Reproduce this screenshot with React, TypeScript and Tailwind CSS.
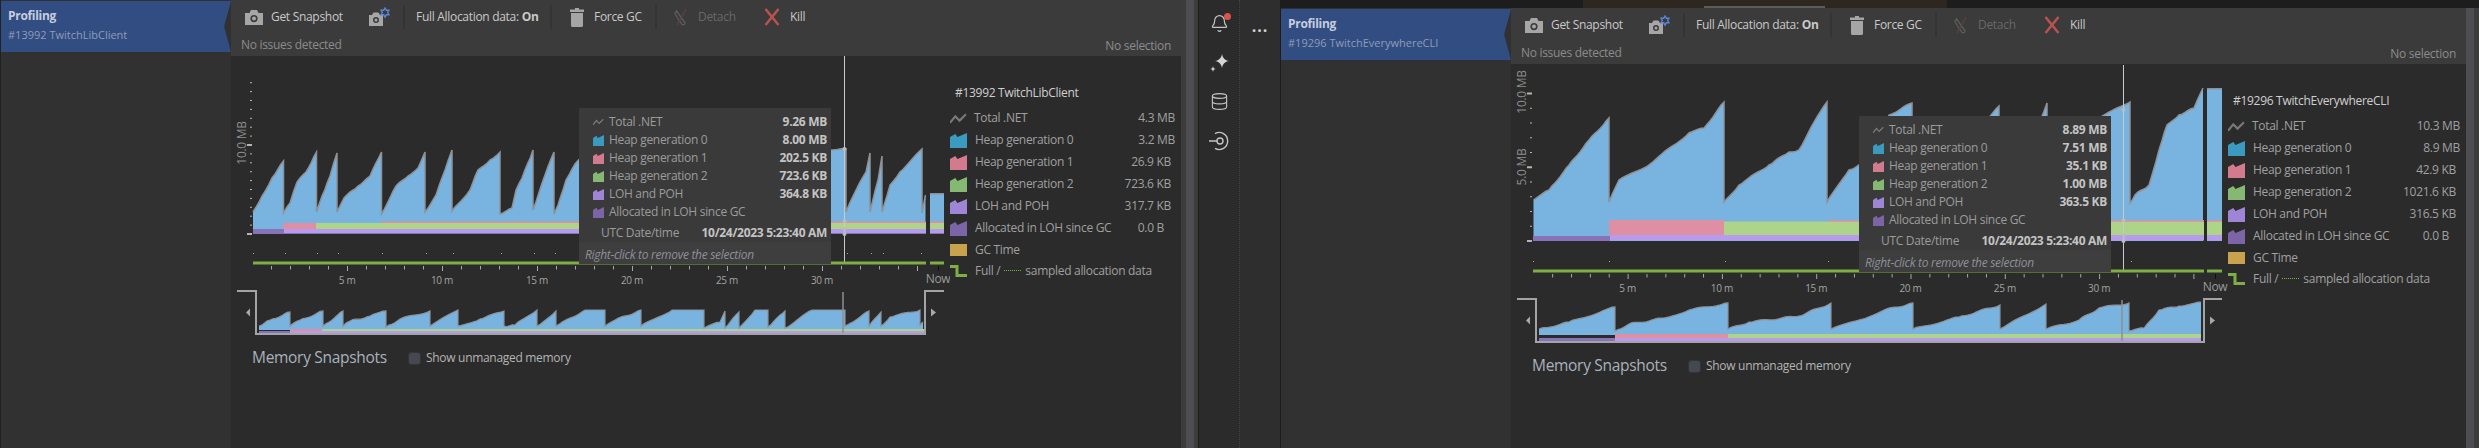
import { Bell, Database } from "lucide-react";

type Pt = [number, number];
type Bar = [number, number, number, number, string];

const BLUE = "#79b3e0";
const PINK = "#df8fa3";
const GREEN = "#aed489";
const LILAC = "#b79cee";
const PLUM = "#8872b8";

// jagged outline of one saw tooth, the reference is a stepped line
function jag(points: Pt[]) {
  const out: string[] = [];
  points.forEach((p, i) => {
    if (i === 0) {
      out.push(`${p[0]},${p[1]}`);
      return;
    }
    const [x0, y0] = points[i - 1];
    const n = Math.max(1, Math.round((p[0] - x0) / 3));
    for (let k = 1; k <= n; k++) {
      const t = k / n;
      const x = x0 + (p[0] - x0) * t;
      const flat = y0 === p[1];
      const noise = k === n || flat ? 0 : Math.sin(x * 1.9) * 0.8;
      out.push(`${x.toFixed(1)},${(y0 + (p[1] - y0) * t + noise).toFixed(1)}`);
    }
  });
  return out;
}

function Teeth({ teeth, base, width }: { teeth: Pt[][]; base: number; width: number }) {
  const line = teeth.flatMap((t) => jag(t)).join(" ");
  const first = teeth[0][0];
  const end = teeth[teeth.length - 1][teeth[teeth.length - 1].length - 1];
  return (
    <>
      <polygon points={`${first[0]},${base} ${line} ${end[0]},${base}`} fill={BLUE} />
      <polyline points={line} fill="none" stroke="#8e9298" strokeWidth={width} />
    </>
  );
}

type ChartData = {
  x: number;
  y: number;
  w: number;
  zero: number;
  step: number;
  tickCount: number;
  majors: number[];
  tickX: number;
  axisLabels: { text: string; x: number; y: number }[];
  teeth: Pt[][];
  block: [number, number, number];
  stack: Bar[];
  gap: [number, number];
  crossX: number;
  crossTop: number;
  crossDots: number[];
  gcY: number;
  gcDots: number[];
  allocY: number;
  t0: number;
  tStep: number;
  tickY: number;
  labelY: number;
  nowX: number;
  nowY: number;
  start: number;
  miniTeeth: Pt[][];
  miniBase: number;
  miniStack: Bar[];
  bracket: { x0: number; vx: number; top: number; bot: number; rx: number; end: number };
  miniLine: number;
};

function Chart({ d }: { d: ChartData }) {
  const ticks = Array.from({ length: d.tickCount }, (_, i) => i);
  const minutes = Array.from({ length: 35 }, (_, i) => i + 1);
  const b = d.bracket;
  const arrowY = (b.top + b.bot) / 2;
  return (
    <svg viewBox={`${d.x} ${d.y} ${d.w} 290`} className="block h-[290px] shrink-0" style={{ width: d.w }}>
      {ticks.map((i) => {
        const major = d.majors.includes(i);
        return (
          <rect key={i} x={major ? d.tickX - 3 : d.tickX} y={d.zero - i * d.step - (major ? 1 : 0.5)} width={major ? 5 : 2} height={major ? 2 : 1} fill="#b5b5b5" />
        );
      })}
      {d.axisLabels.map((l) => (
        <text key={l.text} x={l.x} y={l.y} transform={`rotate(-90 ${l.x} ${l.y})`} textAnchor="middle" dominantBaseline="central" fontSize="12" fill="#8d8d8d">
          {l.text}
        </text>
      ))}

      <Teeth teeth={d.teeth} base={d.zero} width={1.5} />
      <rect x={d.block[0]} y={d.block[2]} width={d.block[1] - d.block[0]} height={d.zero - d.block[2]} fill={BLUE} />
      <rect x={d.block[0]} y={d.block[2] - 1} width={d.block[1] - d.block[0]} height={1.5} fill="#8e9298" />
      {d.stack.map(([x1, x2, y1, y2, c], i) => (
        <rect key={i} x={x1} y={y1} width={x2 - x1} height={y2 - y1} fill={c} />
      ))}
      <rect x={d.gap[0]} y={d.y} width={d.gap[1] - d.gap[0]} height={d.zero + 0.5 - d.y} fill="#2b2b2b" />

      <line x1={d.crossX} y1={d.crossTop} x2={d.crossX} y2={d.allocY + 1} stroke="#c9c9c9" />
      {d.crossDots.map((y) => (
        <circle key={y} cx={d.crossX} cy={y} r={2} fill="#b9bcc0" />
      ))}

      {d.gcDots.map((x) => (
        <rect key={x} x={x} y={d.gcY} width={1} height={1} fill="#c9a24e" />
      ))}
      <rect x={d.start} y={d.allocY - 1.5} width={d.gap[0] - d.start} height={3} fill="#7fae45" />
      <rect x={d.gap[1]} y={d.allocY - 1.5} width={d.block[1] - d.gap[1]} height={3} fill="#7fae45" />

      {minutes.map((m) => (
        <rect key={m} x={d.t0 + m * d.tStep} y={d.tickY} width={1} height={m % 5 === 0 ? 5 : 3.5} fill="#a8a8a8" />
      ))}
      <rect x={d.nowX} y={d.tickY} width={1} height={5} fill="#111111" />
      {[5, 10, 15, 20, 25, 30].map((m) => (
        <text key={m} x={d.t0 + m * d.tStep} y={d.labelY} textAnchor="middle" dominantBaseline="central" fontSize="10" fill="#a3a3a3">
          {m} m
        </text>
      ))}
      <text x={d.nowX} y={d.nowY} textAnchor="middle" dominantBaseline="central" fontSize="12" fill="#9a9a9a">
        Now
      </text>

      <Teeth teeth={d.miniTeeth} base={d.miniBase} width={1.2} />
      {d.miniStack.map(([x1, x2, y1, y2, c], i) => (
        <rect key={i} x={x1} y={y1} width={x2 - x1} height={y2 - y1} fill={c} />
      ))}
      <line x1={d.miniLine} y1={b.top + 1} x2={d.miniLine} y2={b.bot} stroke="#8f8f8f" strokeWidth={1.5} />
      <polyline points={`${b.x0},${b.top} ${b.vx},${b.top} ${b.vx},${b.bot} ${b.rx},${b.bot} ${b.rx},${b.top} ${b.end},${b.top}`} fill="none" stroke="#a3a3a8" strokeWidth={2} />
      <polygon points={`${b.vx - 6},${arrowY - 4} ${b.vx - 6},${arrowY + 4} ${b.vx - 10},${arrowY}`} fill="#a8a8a8" />
      <polygon points={`${b.rx + 6},${arrowY - 4} ${b.rx + 6},${arrowY + 4} ${b.rx + 11},${arrowY}`} fill="#a8a8a8" />
    </svg>
  );
}

function CameraIcon({ className }: { className?: string }) {
  return (
    <svg viewBox="0 0 18 15" className={className}>
      <path fillRule="evenodd" fill="#a6a6a6" d="M0 3h4.500l1.500-3h6l1.500 3H18v12H0zM9 5a3.600 3.600 0 100 7.200 3.600 3.600 0 000-7.200zM9 6.600a2 2 0 110 4 2 2 0 010-4z" />
    </svg>
  );
}

function GearCamera() {
  return (
    <svg viewBox="0 0 21 20" className="h-[20px] w-[21px]">
      <path fillRule="evenodd" fill="#a6a6a6" d="M0 8h3l1.500-2.500h5L11 8h3v11H0zM7 10a3 3 0 100 6 3 3 0 000-6zM7 11.500a1.500 1.500 0 110 3 1.500 1.500 0 010-3z" />
      <path fill="none" stroke="#5b83d6" strokeWidth="1.400" d="M16 1l1.300 2.200H20l-1.300 2.300L20 7.800h-2.700L16 10l-1.300-2.200H12l1.300-2.300L12 3.200h2.700z" />
    </svg>
  );
}

function TrashIcon() {
  return (
    <svg viewBox="0 0 14 19" className="h-[19px] w-[14px]">
      <path fill="#a6a6a6" d="M5 0h4v1.500h5v2.500H0V1.500h5zM1 5h12v12.500a1.500 1.500 0 01-1.500 1.500h-9A1.500 1.500 0 011 17.500z" />
    </svg>
  );
}

function DetachIcon() {
  return (
    <svg viewBox="0 0 16 18" className="h-[18px] w-[16px]" fill="none" strokeWidth="1.300">
      <path stroke="#5d5d5d" d="M3 2l9 13a2 2 0 01-3 1.500L2 6a1.500 1.500 0 012.500-1.500L11 14" />
      <path stroke="#5b4442" d="M13 1L4 17" />
    </svg>
  );
}

function KillIcon() {
  return (
    <svg viewBox="0 0 16 18" className="h-[18px] w-[16px]">
      <path stroke="#b9524f" strokeWidth="2.600" fill="none" d="M1.500 1l13 16M14.500 1l-13 16" />
    </svg>
  );
}

function Separator({ left }: { left: string }) {
  return <div className={`h-[24px] w-[2px] bg-[#343434] ${left}`} />;
}

function Toolbar() {
  return (
    <div className="h-[56px] shrink-0 bg-[#3b3b3b] text-[12px] text-[#c9c9c9]">
      <div className="flex h-[34px] items-center pl-[14px]">
        <CameraIcon className="h-[15px] w-[18px]" />
        <span className="ml-[8px] w-[98px]">Get Snapshot</span>
        <GearCamera />
        <Separator left="ml-[13px]" />
        <span className="ml-[11px] w-[134px] whitespace-nowrap">
          Full Allocation data: <b className="font-bold">On</b>
        </span>
        <Separator left="" />
        <div className="ml-[18px]">
          <TrashIcon />
        </div>
        <span className="ml-[10px] w-[60px] whitespace-nowrap">Force GC</span>
        <Separator left="ml-[1px]" />
        <div className="ml-[16px]">
          <DetachIcon />
        </div>
        <span className="ml-[9px] w-[66px] text-[#676767]">Detach</span>
        <KillIcon />
        <span className="ml-[10px]">Kill</span>
      </div>
      <div className="flex items-center justify-between pl-[10px] pr-[10px] text-[#8b8b8b]">
        <span>No issues detected</span>
        <span className="mt-[3px]">No selection</span>
      </div>
    </div>
  );
}

function SwatchIcon({ color, className }: { color: string; className: string }) {
  return (
    <svg viewBox="0 0 16 15" preserveAspectRatio="none" className={className}>
      <polygon points="0,4 5,1 7,4 16,0 16,15 0,15" fill={color} />
    </svg>
  );
}

function TotalIcon({ className }: { className: string }) {
  return (
    <svg viewBox="0 0 16 10" className={className}>
      <polyline points="0,9 5,3 9,7 15,1" fill="none" stroke="#77777c" strokeWidth="2" />
    </svg>
  );
}

const SWATCHES = ["#3a9abf", "#d27a8e", "#85b973", "#9f85d6", "#7b65a6"];
const ROW_NAMES = ["Heap generation 0", "Heap generation 1", "Heap generation 2", "LOH and POH", "Allocated in LOH since GC"];

function Tooltip({ total, rows }: { total: string; rows: string[] }) {
  return (
    <div className="absolute left-[348px] top-[52px] flex h-[156px] w-[252px] flex-col bg-[#3a3a3a] text-[12px] text-[#9c9c9c]">
      <div className="flex-1 pl-[14px] pr-[4px] pt-[5px]">
        <div className="flex h-[18px] items-center">
          <TotalIcon className="h-[8px] w-[11px]" />
          <span className="ml-[5px] flex-1">Total .NET</span>
          <b className="font-bold text-[#c4c4c4]">{total}</b>
        </div>
        {ROW_NAMES.map((name, i) => (
          <div key={name} className="flex h-[18px] items-center">
            <SwatchIcon color={SWATCHES[i]} className="h-[11px] w-[11px]" />
            <span className="ml-[5px] flex-1">{name}</span>
            <b className="font-bold text-[#c4c4c4]">{rows[i]}</b>
          </div>
        ))}
        <div className="mt-[3px] flex h-[18px] items-center pl-[8px]">
          <span className="flex-1">UTC Date/time</span>
          <b className="font-bold text-[#c4c4c4]">10/24/2023 5:23:40 AM</b>
        </div>
      </div>
      <div className="flex h-[23px] items-center bg-[#3e3e3e] pl-[6px] pt-[4px] italic text-[#8e9099]">Right-click to remove the selection</div>
    </div>
  );
}

function Legend({ title, total, values, margins }: { title: string; total: string; values: string[]; margins: string[] }) {
  return (
    <div className="flex-1 pt-[26px] text-[12px] text-[#a0a0a0]">
      <div className="h-[22px] pl-[5px] leading-[22px] text-[#cfcfcf]">{title}</div>
      <div className="mt-[3px] flex h-[22px] items-center pr-[6px]">
        <TotalIcon className="h-[11px] w-[17px]" />
        <span className="ml-[7px] flex-1">Total .NET</span>
        <span>{total}</span>
      </div>
      {ROW_NAMES.map((name, i) => (
        <div key={name} className="flex h-[22px] items-center pr-[6px]">
          <SwatchIcon color={SWATCHES[i]} className="h-[15px] w-[17px]" />
          <span className="ml-[8px] flex-1">{name}</span>
          <span className={margins[i]}>{values[i]}</span>
        </div>
      ))}
      <div className="flex h-[21px] items-center">
        <div className="h-[12px] w-[17px] bg-[#c9a24e]" />
        <span className="ml-[8px]">GC Time</span>
      </div>
      <div className="flex h-[21px] items-center whitespace-nowrap">
        <svg viewBox="0 0 17 12" className="h-[12px] w-[17px]">
          <polyline points="0,1.500 7,1.500 7,10.500 17,10.500" fill="none" stroke="#7fae45" strokeWidth="3" />
        </svg>
        <span className="ml-[8px]">Full /</span>
        <span className="mx-[4px] inline-block w-[17px] border-t border-dotted border-[#7fae45]" />
        <span>sampled allocation data</span>
      </div>
    </div>
  );
}

function Panel(props: {
  subtitle: string;
  chart: ChartData;
  total: string;
  rows: string[];
  legendTitle: string;
  legendTotal: string;
  legendValues: string[];
}) {
  return (
    <div className="flex flex-1">
      <div className="w-[230px] shrink-0 bg-[#313131]">
        <div className="mt-[1px] flex h-[51px] flex-col justify-center bg-[#324d82] pb-[3px] pl-[7px] [clip-path:polygon(0_0,100%_0,97%_50%,100%_100%,0_100%)]">
          <span className="text-[12px] font-bold leading-[19px] text-[#c6cede]">Profiling</span>
          <span className="text-[11px] leading-[19px] tracking-normal text-[#8f9cb8]">{props.subtitle}</span>
        </div>
      </div>
      <div className="flex min-w-0 flex-1 flex-col bg-[#2b2b2b]">
        <Toolbar />
        <div className="relative flex flex-1">
          <div>
            <Chart d={props.chart} />
            <div className="flex h-[24px] items-center pl-[21px]">
              <span className="w-[156px] whitespace-nowrap text-[15.5px] text-[#a9b2bd]">Memory Snapshots</span>
              <div className="h-[13px] w-[13px] rounded-[3px] border border-[#333] bg-[#434851]" />
              <span className="ml-[5px] whitespace-nowrap text-[12px] text-[#b4b4b4]">Show unmanaged memory</span>
            </div>
          </div>
          <Legend title={props.legendTitle} total={props.legendTotal} values={props.legendValues} margins={["", "mr-[4px]", "mr-[4px]", "mr-[4px]", "mr-[11px]"]} />
          <Tooltip total={props.total} rows={props.rows} />
        </div>
      </div>
    </div>
  );
}

const leftChart: ChartData = {
  x: 231,
  y: 56,
  w: 719,
  zero: 234,
  step: 8.9,
  tickCount: 18,
  majors: [0, 10],
  tickX: 250,
  axisLabels: [{ text: "10.0 MB", x: 241, y: 143 }],
  teeth: [
    [[253, 212], [262, 196], [272, 178], [283.5, 161]],
    [[283.5, 213], [290, 203], [297, 182], [306, 172], [316.5, 152]],
    [[316.5, 212], [322, 196], [330, 176], [337, 153]],
    [[337, 212], [344, 198], [358, 186], [370, 176], [381.5, 152]],
    [[381.5, 214], [396, 186], [408, 176], [418, 168], [425, 152]],
    [[425, 212], [436, 195], [445, 170], [452, 150]],
    [[452, 211], [470, 190], [478, 170], [490, 160], [500, 152]],
    [[500, 214], [512, 208], [516, 190], [522, 178], [533, 150]],
    [[533, 210], [545, 175], [554, 152]],
    [[554, 214], [558, 205], [566, 180], [575, 164], [590, 150], [846, 149]],
    [[846, 212], [856, 190], [866, 172], [870, 153]],
    [[870, 212], [878, 180], [882, 156]],
    [[882, 212], [890, 185], [900, 172], [922, 149]],
    [[922, 213], [925.5, 195]],
  ],
  block: [930, 944, 194],
  stack: [
    [253, 284, 229, 234, PLUM],
    [284, 944, 229, 233.5, LILAC],
    [284, 944, 233, 234, PLUM],
    [283, 316, 223, 229, PINK],
    [316, 944, 223, 229, GREEN],
    [381, 944, 221.5, 223, PINK],
  ],
  gap: [926, 930],
  crossX: 844.5,
  crossTop: 56,
  crossDots: [149, 221, 229, 234],
  gcY: 253,
  gcDots: [253, 285, 317, 338, 382, 426, 453, 501, 534, 555, 847, 871, 883, 921],
  allocY: 263,
  t0: 252,
  tStep: 19,
  tickY: 266,
  labelY: 280,
  nowX: 938,
  nowY: 278,
  start: 253,
  miniTeeth: [
    [[259, 326], [270, 320], [290, 312]],
    [[290, 326], [300, 320], [323, 311]],
    [[323, 326], [343, 311]],
    [[343, 326], [350, 321], [370, 316], [386, 311]],
    [[386, 327], [400, 319], [430, 311]],
    [[430, 326], [458, 310]],
    [[458, 326], [480, 319], [504, 311]],
    [[504, 326], [515, 325], [537, 310]],
    [[537, 326], [556, 311]],
    [[556, 326], [585, 310], [605, 310]],
    [[605, 326], [615, 320], [641, 310]],
    [[641, 326], [672, 310], [704, 310]],
    [[704, 328], [720, 322], [725, 311]],
    [[725, 328], [739, 312]],
    [[739, 328], [755, 310], [768, 310]],
    [[768, 327], [785, 311]],
    [[785, 328], [812, 310], [845, 310]],
    [[845, 326], [869, 311]],
    [[869, 326], [881, 312]],
    [[881, 326], [890, 317], [920, 310]],
    [[920, 325], [923, 322]],
  ],
  miniBase: 330,
  miniStack: [
    [259, 290, 331, 333, PLUM],
    [290, 924, 331, 333, LILAC],
    [290, 322, 329, 331, PINK],
    [322, 924, 329, 331, GREEN],
  ],
  bracket: { x0: 237, vx: 256, top: 291, bot: 334, rx: 925, end: 944 },
  miniLine: 843,
};

const rightChart: ChartData = {
  x: 1512,
  y: 64,
  w: 717,
  zero: 241,
  step: 14.75,
  tickCount: 11,
  majors: [0, 5, 10],
  tickX: 1531,
  axisLabels: [
    { text: "10.0 MB", x: 1522, y: 92 },
    { text: "5.0 MB", x: 1522, y: 167 },
  ],
  teeth: [
    [[1534.5, 200], [1550, 190], [1570, 165], [1590, 140], [1610, 118]],
    [[1610, 202], [1620, 180], [1645, 168], [1675, 145], [1690, 133], [1705, 128], [1725, 102]],
    [[1725, 202], [1740, 185], [1770, 165], [1790, 152], [1800, 150], [1815, 122], [1828, 102]],
    [[1828, 202], [1850, 170], [1870, 160], [1890, 115], [1913, 103]],
    [[1913, 202], [1950, 160], [2000, 106]],
    [[2000, 202], [2030, 150], [2048, 103]],
    [[2048, 202], [2080, 150], [2100, 118], [2131, 102]],
    [[2131, 203], [2136, 195], [2150, 185], [2160, 150], [2168, 125], [2180, 115], [2195, 108], [2204, 88]],
  ],
  block: [2208, 2223, 89],
  stack: [
    [1534, 1611, 236, 241, PLUM],
    [1611, 2223, 235, 240.5, LILAC],
    [1610, 1725, 220, 235, PINK],
    [1725, 2223, 221.5, 235, GREEN],
    [1829, 2223, 220, 221.5, PINK],
  ],
  gap: [2205, 2208],
  crossX: 2124.5,
  crossTop: 65,
  crossDots: [110, 220, 235, 241],
  gcY: 261,
  gcDots: [1534, 1610, 1726, 1829, 1914, 2001, 2049, 2132],
  allocY: 271,
  t0: 1534.3,
  tStep: 18.86,
  tickY: 274,
  labelY: 288,
  nowX: 2216,
  nowY: 286,
  start: 1534,
  miniTeeth: [
    [[1540, 329], [1570, 322], [1616, 307]],
    [[1616, 331], [1630, 324], [1665, 318], [1690, 310], [1729, 303]],
    [[1729, 329], [1750, 322], [1800, 316], [1832, 303]],
    [[1832, 329], [1860, 320], [1885, 310], [1914, 303]],
    [[1914, 329], [1960, 317], [2001, 305]],
    [[2001, 329], [2047, 304]],
    [[2047, 329], [2080, 320], [2100, 308], [2130, 303]],
    [[2130, 331], [2145, 328], [2160, 310], [2180, 306], [2202, 302]],
  ],
  miniBase: 335,
  miniStack: [
    [1540, 1616, 338, 341, PLUM],
    [1616, 2202, 338, 341, LILAC],
    [1616, 1729, 334, 338, PINK],
    [1729, 2202, 334, 338, GREEN],
  ],
  bracket: { x0: 1518, vx: 1537, top: 299, bot: 342, rx: 2205, end: 2223 },
  miniLine: 2123,
};

function SparkleIcon() {
  return (
    <svg viewBox="0 0 22 22" className="h-[22px] w-[22px]">
      <path fill="#d4d4d4" d="M14 1c.800 4.200 2.800 6.200 7 7-4.200.800-6.200 2.800-7 7-.800-4.200-2.800-6.200-7-7 4.200-.800 6.200-2.800 7-7z" />
      <path fill="#d4d4d4" d="M5 13c.300 2 1 2.700 3 3-2 .300-2.700 1-3 3-.300-2-1-2.700-3-3 2-.300 2.700-1 3-3z" />
    </svg>
  );
}

function PluginIcon() {
  return (
    <svg viewBox="0 0 20 20" className="h-[20px] w-[20px]" fill="none" stroke="#c4c4c4" strokeWidth="1.400">
      <circle cx="11" cy="10" r="3" />
      <path d="M0 10h8M6 2.600A8.500 8.500 0 1 1 6 17.400" />
    </svg>
  );
}

export default function App() {
  return (
    <div className="flex h-[448px] w-[2479px] overflow-hidden bg-[#2b2b2b] font-['Open_Sans',sans-serif] tracking-[-0.3px]">
      <div className="flex w-[1181px] border-l border-[#222222]">
        <Panel
          subtitle="#13992 TwitchLibClient"
          chart={leftChart}
          total="9.26 MB"
          rows={["8.00 MB", "202.5 KB", "723.6 KB", "364.8 KB", ""]}
          legendTitle="#13992 TwitchLibClient"
          legendTotal="4.3 MB"
          legendValues={["3.2 MB", "26.9 KB", "723.6 KB", "317.7 KB", "0.0 B"]}
        />
      </div>
      <div className="flex w-[18px] border-r border-[#1c1c1c] bg-[#3c3c3c] pl-[5px]">
        <div className="w-[8px] bg-[#4d4d52]" />
      </div>
      <div className="flex w-[41px] flex-col items-center border-r border-dotted border-[#444] pt-[13px] text-[#c4c4c4]">
        <div className="relative h-[22px]">
          <Bell size={19} strokeWidth={1.5} className="mt-[1px]" />
          <div className="absolute right-[-2px] top-0 h-[7px] w-[7px] rounded-full bg-[#d9534f]" />
        </div>
        <div className="mt-[18px]">
          <SparkleIcon />
        </div>
        <Database size={19} strokeWidth={1.4} className="mt-[17px]" />
        <div className="mt-[20px]">
          <PluginIcon />
        </div>
      </div>
      <div className="w-[41px] border-r border-[#1c1c1c] bg-[#2e2e2e] pt-[16px] text-center text-[16px] font-bold leading-[20px] tracking-[1px] text-[#d0d0d0]">...</div>
      <div className="flex flex-1 flex-col">
        <div className="flex h-[8px] shrink-0 bg-[#1d1d1d]">
          <div className="ml-[302px] w-[121px] bg-[#2e2720]" />
          <div className="flex w-[121px] flex-col justify-end bg-[#2e2720]">
            <div className="h-[2px] bg-[#5c5c5c]" />
          </div>
          <div className="w-[122px] bg-[#2e2720]" />
        </div>
        <div className="flex flex-1">
          <Panel
            subtitle="#19296 TwitchEverywhereCLI"
            chart={rightChart}
            total="8.89 MB"
            rows={["7.51 MB", "35.1 KB", "1.00 MB", "363.5 KB", ""]}
            legendTitle="#19296 TwitchEverywhereCLI"
            legendTotal="10.3 MB"
            legendValues={["8.9 MB", "42.9 KB", "1021.6 KB", "316.5 KB", "0.0 B"]}
          />
          <div className="flex w-[13px] bg-[#3c3c3c]">
            <div className="w-[8px] bg-[#4d4d52]" />
          </div>
        </div>
      </div>
    </div>
  );
}
